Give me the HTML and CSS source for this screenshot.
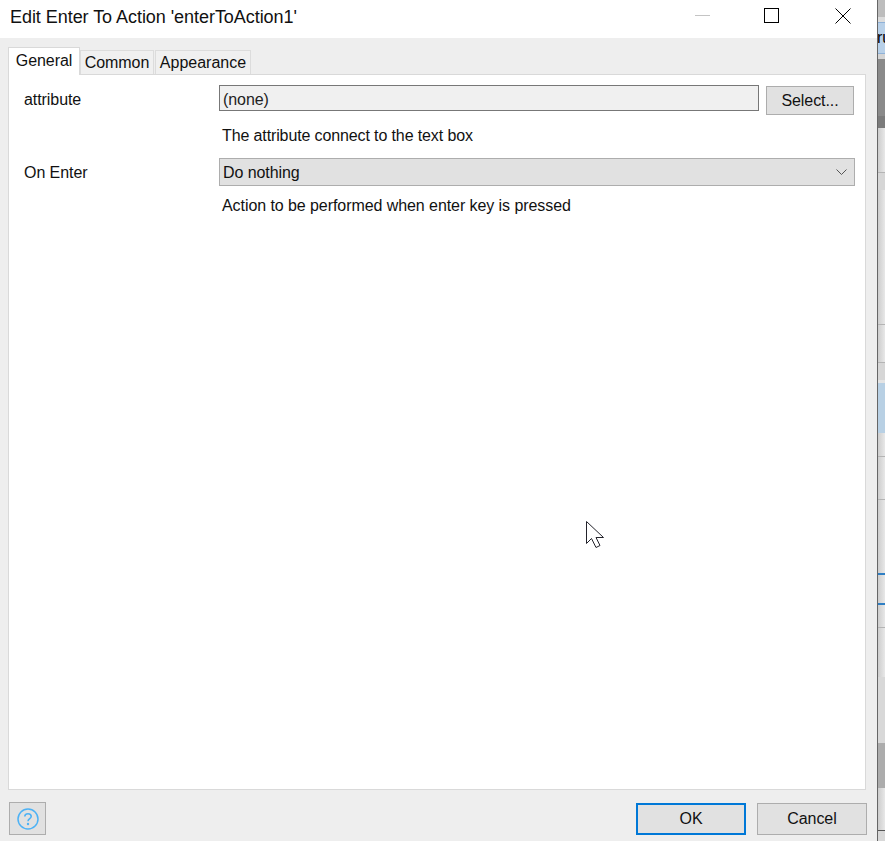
FILE: index.html
```html
<!DOCTYPE html>
<html lang="en">
<head>
    <meta charset="UTF-8">
    <meta name="viewport" content="width=device-width, initial-scale=1.0">
    <title>Edit Enter To Action</title>
    <link rel="stylesheet" href="styles.css">
</head>
<body>
    <div class="screen">
        <!-- Dialog window -->
        <div class="dialog">
            <div class="titlebar">
                <span class="title">Edit Enter To Action 'enterToAction1'</span>
                <div class="window-controls">
                    <svg class="control" width="16" height="16" viewBox="0 0 16 16"><path d="M1 7.5H16" stroke="#c4c4c4" fill="none"/></svg>
                    <svg class="control" width="16" height="16" viewBox="0 0 16 16"><rect x="0.5" y="0.5" width="14" height="14" stroke="#000" fill="none"/></svg>
                    <svg class="control" width="17" height="16" viewBox="0 0 17 16"><path d="M1.5 0.5L16.5 15.5M16.5 0.5L1.5 15.5" stroke="#000" fill="none"/></svg>
                </div>
            </div>

            <div class="dialog-body">
                <div class="tabs">
                    <div class="tab active">General</div>
                    <div class="tab tab-common">Common</div>
                    <div class="tab tab-appearance">Appearance</div>
                </div>

                <div class="panel">
                    <div class="form-row attribute-row">
                        <label class="form-label">attribute</label>
                        <div class="readonly-input">(none)</div>
                        <button class="btn select-btn">Select...</button>
                    </div>
                    <p class="hint hint-attribute">The attribute connect to the text box</p>

                    <div class="form-row enter-row">
                        <label class="form-label">On Enter</label>
                        <div class="dropdown">
                            <span>Do nothing</span>
                            <svg width="11" height="6" viewBox="0 0 11 6"><path d="M0.5 0.5L5.5 5.5L10.5 0.5" stroke="#555" fill="none"/></svg>
                        </div>
                    </div>
                    <p class="hint hint-enter">Action to be performed when enter key is pressed</p>
                </div>

                <div class="footer">
                    <button class="btn help-btn">
                        <svg width="22" height="22" viewBox="0 0 22 22">
                            <circle cx="11" cy="11" r="10" stroke="#4db2f5" stroke-width="1.5" fill="none"/>
                            <path d="M7.8 8.6C7.8 6.8 9.2 5.8 11 5.8C12.8 5.8 14.2 6.8 14.2 8.5C14.2 10.5 11 10.8 11 13.2" stroke="#4db2f5" stroke-width="1.6" fill="none"/>
                            <circle cx="11" cy="16" r="1.2" fill="#4db2f5"/>
                        </svg>
                    </button>
                    <div class="footer-actions">
                        <button class="btn action-btn default">OK</button>
                        <button class="btn action-btn">Cancel</button>
                    </div>
                </div>
            </div>
        </div>

        <!-- Sliver of the window behind the dialog -->
        <div class="behind">
            <div class="strip s-gray"></div>
            <div class="strip s-pale"></div>
            <div class="strip s-blue">ru</div>
            <div class="strip s-pale2"></div>
            <div class="strip s-dark"></div>
            <div class="strip s-row s-row-a"></div>
            <div class="strip s-mid s-mid-a"></div>
            <div class="strip s-row s-row-b"></div>
            <div class="strip s-row s-row-c"></div>
            <div class="strip s-mid s-mid-a"></div>
            <div class="strip s-pale3"></div>
            <div class="strip s-blue2"></div>
            <div class="strip s-row s-row-d"></div>
            <div class="strip s-row s-row-e"></div>
            <div class="strip s-row s-row-f"></div>
            <div class="strip s-row s-row-g"></div>
            <div class="strip s-row s-row-h"></div>
            <div class="strip s-row s-row-i"></div>
            <div class="strip s-shade"></div>
            <div class="strip s-shade2"></div>
            <div class="strip s-row s-row-j"></div>
            <div class="strip s-last"></div>
        </div>

        <!-- Mouse pointer -->
        <svg class="pointer" width="22" height="30" viewBox="0 0 22 30">
            <path d="M1.5 1.5V23.5L6.5 18.5L11 27.5L15 25.5L11 17.5H18.5Z" fill="#fff" stroke="#23232b" stroke-width="1"/>
        </svg>
    </div>
</body>
</html>
```

FILE: styles.css
```css
* {
    box-sizing: border-box;
}

body {
    margin: 0;
    padding: 0;
    font-family: "Liberation Sans", Arial, sans-serif;
    font-size: 16px;
    letter-spacing: -0.07px;
    color: #000;
    background-color: #eee;
}

.screen {
    position: relative;
    display: flex;
    width: 885px;
    height: 841px;
    overflow: hidden;
}

/* Dialog */
.dialog {
    display: flex;
    flex-direction: column;
    width: 877px;
    height: 841px;
}

.titlebar {
    display: flex;
    align-items: center;
    justify-content: space-between;
    flex: none;
    height: 38px;
    padding: 0 26px 4px 10px;
    background-color: #fff;
}

.title {
    font-size: 18px;
    letter-spacing: -0.05px;
    color: #111;
}

.window-controls {
    display: flex;
    align-self: flex-start;
    gap: 54px;
    margin-top: 8px;
}

.control {
    display: block;
}

.dialog-body {
    display: flex;
    flex-direction: column;
    flex: 1;
    padding: 9px 11px 6px 8px;
    background-color: #eee;
}

/* Tabs */
.tabs {
    display: flex;
    align-items: flex-end;
    flex: none;
    height: 27px;
    position: relative;
    z-index: 1;
}

.tab {
    height: 24px;
    padding-top: 1px;
    line-height: 21px;
    text-align: center;
    border: 1px solid #dcdcdc;
    border-bottom: none;
    background-color: #f0f0f0;
    color: #111;
}

.tab.active {
    width: 72px;
    height: 28px;
    margin-bottom: -1px;
    padding-top: 2px;
    background-color: #fff;
    border-color: #d9d9d9;
}

.tab-common {
    width: 74px;
}

.tab-appearance {
    width: 96px;
    margin-left: 1px;
    letter-spacing: 0;
}

/* Main panel */
.panel {
    flex: none;
    height: 716px;
    padding: 10px 11px 0 15px;
    background-color: #fff;
    border: 1px solid #d9d9d9;
}

.form-row {
    display: flex;
    align-items: flex-start;
}

.form-label {
    flex: none;
    width: 195px;
    line-height: 29px;
    color: #111;
}

.readonly-input {
    flex: none;
    width: 540px;
    height: 26px;
    padding-left: 3px;
    line-height: 27px;
    border: 1px solid #777;
    background-color: #f0f0f0;
    color: #222;
}

.btn {
    font-family: inherit;
    font-size: 16px;
    letter-spacing: inherit;
    color: #111;
    padding: 0;
    border: 1px solid #adadad;
    background-color: #e1e1e1;
}

.select-btn {
    width: 88px;
    height: 29px;
    margin: 1px 0 0 7px;
}

.hint {
    margin: 0;
    padding-left: 198px;
    line-height: 20px;
    color: #111;
}

.hint-attribute {
    margin-top: 11px;
    letter-spacing: -0.12px;
}

.enter-row {
    margin-top: 12px;
}

.enter-row .form-label {
    line-height: 30px;
}

.dropdown {
    display: flex;
    align-items: center;
    justify-content: space-between;
    flex: none;
    width: 636px;
    height: 28px;
    padding: 0 7px 0 3px;
    border: 1px solid #adadad;
    background-color: #e1e1e1;
    color: #111;
}

.dropdown span {
    padding-top: 2px;
}

.hint-enter {
    margin-top: 8px;
}

/* Footer buttons */
.footer {
    display: flex;
    align-items: flex-start;
    justify-content: space-between;
    padding-top: 12px;
    padding-left: 1px;
    margin-right: -1px;
}

.help-btn {
    display: flex;
    align-items: center;
    justify-content: center;
    width: 37px;
    height: 33px;
}

.footer-actions {
    display: flex;
    gap: 11px;
    padding-top: 1px;
}

.action-btn {
    width: 110px;
    height: 32px;
}

.action-btn.default {
    border: 2px solid #0078d7;
}

/* Window behind the dialog */
.behind {
    flex: none;
    width: 8px;
    height: 841px;
    border-left: 1px solid #666;
    overflow: hidden;
    background-color: #e6e6e6;
}

.strip {
    width: 100%;
}

.s-gray { height: 17px; background-color: #bdbdbd; }
.s-pale { height: 5px; background-color: #dcdcdc; }
.s-blue {
    height: 32px;
    line-height: 30px;
    font-size: 16px;
    text-indent: -1px;
    white-space: nowrap;
    background-color: #b8d0e8;
    border-top: 1px solid #8fb2d8;
    border-bottom: 1px solid #8fb2d8;
}
.s-pale2 { height: 5px; background-color: #d4d4d4; }
.s-dark {
    height: 69px;
    background-color: #8a8a8a;
    border-bottom: 12px solid #7b7b7b;
}
.s-row {
    background: linear-gradient(to right, #cdcdcd, #e8e8e8);
    border-bottom: 1px solid #b4b4b4;
}
.s-row-a { height: 45px; }
.s-mid-a { height: 17px; background-color: #d6d6d6; }
.s-row-b { height: 135px; }
.s-row-c { height: 38px; }
.s-pale3 { height: 3px; background-color: #e4e4e4; }
.s-blue2 { height: 50px; background-color: #b8d0e4; }
.s-row-d { height: 24px; }
.s-row-e { height: 43px; }
.s-row-f { height: 75px; border-bottom: 2px solid #2f7fc4; }
.s-row-g { height: 30px; border-bottom: 2px solid #2f7fc4; }
.s-row-h { height: 23px; }
.s-row-i { height: 49px; border-bottom: none; }
.s-shade { height: 66px; background-color: #d8d8d8; }
.s-shade2 { height: 45px; background-color: #acacac; }
.s-row-j { height: 42px; border-bottom: none; }
.s-last { height: 11px; background-color: #d8d8d8; border-top: 1px solid #555; }

.pointer {
    position: absolute;
    left: 585px;
    top: 520px;
}
```
